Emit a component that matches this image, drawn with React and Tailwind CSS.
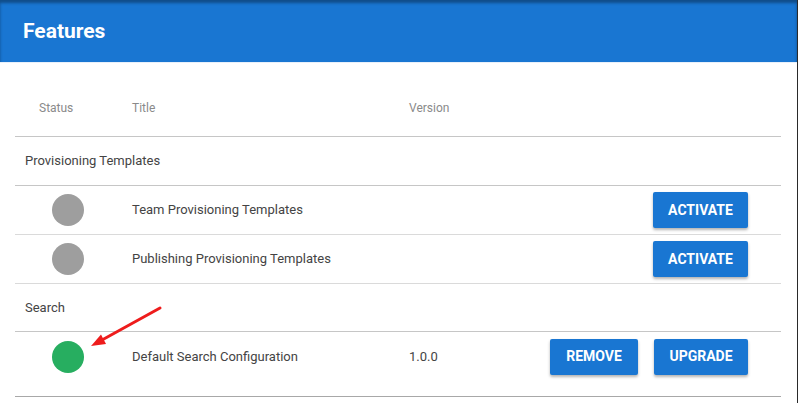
import React from 'react';

const groups = [
  {
    name: 'Provisioning Templates',
    items: [
      { title: 'Team Provisioning Templates', active: false, version: '' },
      { title: 'Publishing Provisioning Templates', active: false, version: '' },
    ],
  },
  {
    name: 'Search',
    items: [{ title: 'Default Search Configuration', active: true, version: '1.0.0' }],
  },
];

function Btn({ children, className }) {
  return (
    <button className={`h-[36px] rounded-[2px] bg-[#1976d2] text-white text-[14px] font-bold shadow-[0_2px_3px_rgba(0,0,0,0.3)] ${className}`}>
      {children}
    </button>
  );
}

export default function App() {
  return (
    <div className="flex w-[798px] h-[403px] bg-white overflow-hidden" style={{ fontFamily: 'Roboto, "Liberation Sans", sans-serif' }}>
      <div className="relative w-[797px] flex flex-col">
        {/* Header */}
        <div className="h-[63px] bg-[#1976d2] border-b border-[#e8f0fa] shadow-[inset_0_3px_3px_rgba(0,0,0,0.35)] flex items-center px-[23px]">
          <h1 className="text-white text-[21px] font-bold pt-[2px]">Features</h1>
        </div>

        {/* Table */}
        <div className="h-[334px] mx-[15px] mr-[16px] flex flex-col border-b border-[#a8a8a8]">
          <div className="h-[74px] flex items-end pb-[19px] border-b border-[#c6c6c6] text-[12px] text-[#8a8a8a]">
            <div className="w-[117px] pl-[24px]">Status</div>
            <div className="w-[277px]">Title</div>
            <div>Version</div>
          </div>

          {groups.map((g, gi) => (
            <React.Fragment key={g.name}>
              <div className={`${gi === 1 ? 'h-[48px]' : 'h-[49px]'} flex items-center pl-[10px] border-b border-[#c6c6c6] text-[13px] text-[#444]`}>
                {g.name}
              </div>
              {g.items.map((it, ii) => {
                const last = gi === groups.length - 1 && ii === g.items.length - 1;
                return (
                  <div
                    key={it.title}
                    className={`h-[49px] flex items-center text-[13px] text-[#444] ${last ? '' : 'border-b border-[#dadada]'}`}
                  >
                    <div className="w-[117px] pl-[37px]">
                      <div className={`w-[32px] h-[32px] rounded-full ${it.active ? 'bg-[#27ae60]' : 'bg-[#9e9e9e]'}`} />
                    </div>
                    <div className="w-[277px]">{it.title}</div>
                    <div className="flex-1">{it.version}</div>
                    <div className="flex gap-4 pr-[33px]">
                      {it.active ? (
                        <>
                          <Btn className="w-[88px]">REMOVE</Btn>
                          <Btn className="w-[94px]">UPGRADE</Btn>
                        </>
                      ) : (
                        <Btn className="w-[95px]">ACTIVATE</Btn>
                      )}
                    </div>
                  </div>
                );
              })}
            </React.Fragment>
          ))}
        </div>

        {/* Annotation arrow */}
        <svg className="absolute left-0 top-0 pointer-events-none" width="797" height="403">
          <line x1="160" y1="308" x2="102" y2="340" stroke="#ee1c1c" strokeWidth="3" strokeLinecap="round" />
          <polygon points="91,346 106,344 101,334.5" fill="#ee1c1c" />
        </svg>
      </div>
      <div className="w-px h-[403px] bg-[#2a2a2a]" />
    </div>
  );
}
